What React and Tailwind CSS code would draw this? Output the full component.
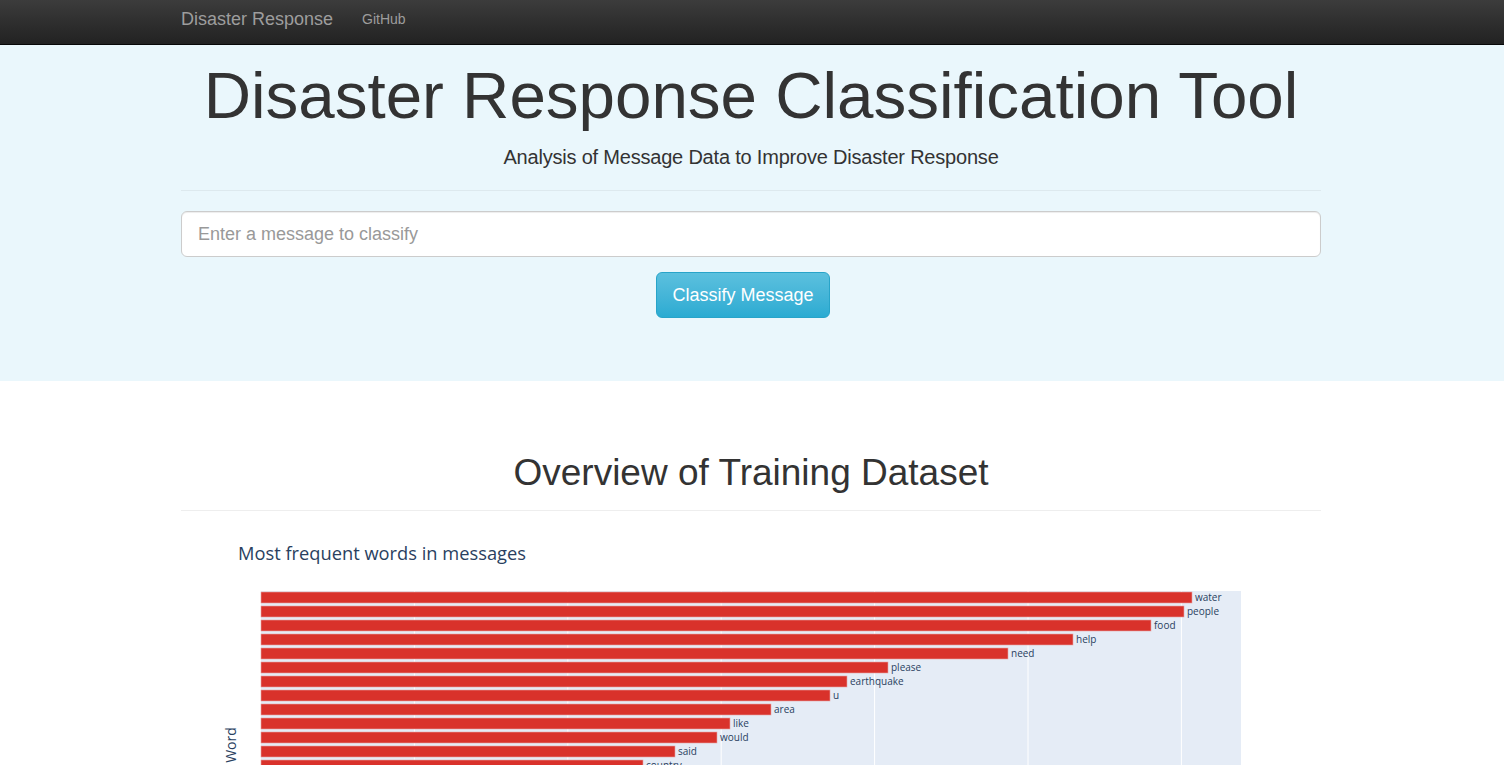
import React from 'react';

const words = [
  { word: 'water', end: 1192 },
  { word: 'people', end: 1184 },
  { word: 'food', end: 1151 },
  { word: 'help', end: 1073 },
  { word: 'need', end: 1008 },
  { word: 'please', end: 888 },
  { word: 'earthquake', end: 847 },
  { word: 'u', end: 830 },
  { word: 'area', end: 771 },
  { word: 'like', end: 730 },
  { word: 'would', end: 717 },
  { word: 'said', end: 675 },
  { word: 'country', end: 643 },
  { word: 'also', end: 620 },
  { word: 'know', end: 598 },
  { word: 'one', end: 580 },
  { word: 'government', end: 561 },
  { word: 'tent', end: 540 },
  { word: 'house', end: 522 },
  { word: 'rain', end: 505 },
];

function WordChart() {
  // plot origin inside the svg (svg starts at the container's left edge, x=181)
  const left = 80;
  const top = 60;
  const width = 980;
  const pitch = 14;
  const height = pitch * 22;
  const grid = [1, 2, 3, 4, 5, 6].map((k) => left + k * 153.4);

  return (
    <svg width="1140" height={top + height + 40} className="block" style={{ fontFamily: '"Open Sans", Verdana, Arial, sans-serif' }}>
      <text x="57" y="29" fontSize="18.3" fill="#2a3f5f">Most frequent words in messages</text>
      <rect x={left} y={top} width={width} height={height} fill="#e5ecf6" />
      {grid.map((x) => (
        <line key={x} x1={x} x2={x} y1={top} y2={top + height} stroke="#ffffff" strokeWidth="1" />
      ))}
      {words.map((w, i) => {
        const y = top + 1 + i * pitch;
        const x2 = w.end - 181;
        return (
          <g key={w.word}>
            <rect x={left} y={y} width={x2 - left} height="11" fill="#d9322b" stroke="#e8a3a3" strokeWidth="0.6" />
            <text x={x2 + 3} y={y + 9} fontSize="10" fill="#2a3f5f">{w.word}</text>
          </g>
        );
      })}
      <text
        x="55"
        y={top + height / 2}
        fontSize="14"
        fill="#2a3f5f"
        textAnchor="middle"
        transform={`rotate(-90 55 ${top + height / 2})`}
      >
        Word
      </text>
    </svg>
  );
}

export default function App() {
  return (
    <div className="min-h-screen bg-white text-[#333]" style={{ fontFamily: '"Liberation Sans", Arial, sans-serif' }}>
      {/* Navbar */}
      <nav className="h-[45px] bg-gradient-to-b from-[#3c3c3c] to-[#222222] border-b border-[#080808]">
        <div className="w-[1142px] mx-auto pr-[2px] h-full flex items-center pb-[6px]">
          <span className="text-[18px] text-[#9d9d9d] leading-none">Disaster Response</span>
          <span className="ml-[29px] text-[14px] text-[#9d9d9d] leading-none">GitHub</span>
        </div>
      </nav>

      {/* Jumbotron */}
      <div className="bg-[#eaf7fc] h-[336px]">
        <div className="w-[1142px] mx-auto pr-[2px] pt-[13px]">
          <h1 className="text-center text-[65.5px] leading-[76px] text-[#333]">Disaster Response Classification Tool</h1>
          <p className="text-center text-[20px] font-light leading-[24px] mt-[11px] text-[#333] tracking-[-0.2px]">
            Analysis of Message Data to Improve Disaster Response
          </p>
          <hr className="mt-[21px] border-t border-[#dde9ee]" />
          <div className="mt-[20px]">
            <input
              type="text"
              placeholder="Enter a message to classify"
              className="w-full h-[46px] rounded-[6px] border border-[#cccccc] bg-white px-[16px] text-[18px] placeholder:text-[#999999] shadow-[inset_0_1px_1px_rgba(0,0,0,0.075)] outline-none"
            />
          </div>
          <div className="flex justify-center mt-[15px] pr-[16px]">
            <button className="h-[46px] px-[15px] rounded-[6px] bg-gradient-to-b from-[#5bc0de] to-[#2aabd2] border border-[#28a4c9] text-white text-[18px]">
              Classify Message
            </button>
          </div>
        </div>
      </div>

      {/* Overview */}
      <div className="w-[1142px] mx-auto pr-[2px] pt-[72px]">
        <h1 className="text-center text-[37px] leading-[40px] text-[#333]">Overview of Training Dataset</h1>
        <hr className="mt-[17px] mb-[20px] border-t border-[#eeeeee]" />
        <WordChart />
      </div>
    </div>
  );
}
